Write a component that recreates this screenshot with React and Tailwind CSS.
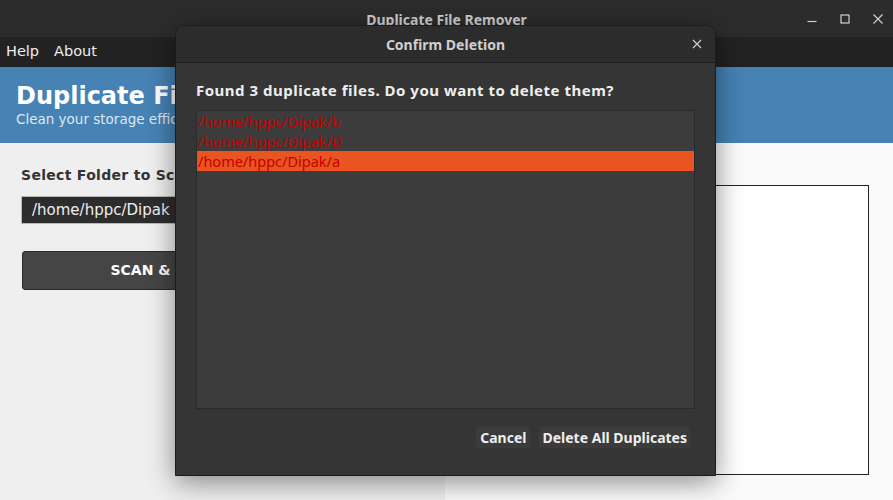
import React from 'react';

const gtk = { fontFamily: '"Noto Sans", "DejaVu Sans", sans-serif' };
const tk = { fontFamily: '"DejaVu Sans", "Noto Sans", sans-serif' };

const files = ['/home/hppc/Dipak/b', '/home/hppc/Dipak/D', '/home/hppc/Dipak/a'];

function WindowControls() {
  return (
    <div className="absolute right-0 top-0 h-[37px] flex items-center gap-[19px] pr-[8px] text-[#d0d0d0]">
      <svg width="14" height="14" viewBox="0 0 14 14">
        <path d="M2.5 9.5h9" stroke="currentColor" strokeWidth="1.2" />
      </svg>
      <svg width="14" height="14" viewBox="0 0 14 14">
        <rect x="3" y="3" width="8" height="8" fill="none" stroke="currentColor" strokeWidth="1.2" />
      </svg>
      <svg width="14" height="14" viewBox="0 0 14 14">
        <path d="M2.5 2.5l9 9M11.5 2.5l-9 9" stroke="currentColor" strokeWidth="1.2" />
      </svg>
    </div>
  );
}

function ConfirmDialog() {
  return (
    <div
      className="absolute left-[175px] top-[25px] w-[541px] h-[451px] bg-[#353535] rounded-t-[10px] border border-[#1c1c1c] shadow-[0_6px_28px_rgba(0,0,0,0.45)] flex flex-col"
      style={gtk}
    >
      <div className="relative h-[37px] shrink-0 bg-[#2c2c2c] rounded-t-[10px] border-b border-[#1e1e1e] flex items-center justify-center">
        <span className="text-[14px] font-bold text-[#cfcfcf]">Confirm Deletion</span>
        <svg className="absolute right-[12px] top-[12px] text-[#cfcfcf]" width="12" height="12" viewBox="0 0 12 12">
          <path d="M2 2l8 8M10 2l-8 8" stroke="currentColor" strokeWidth="1.2" />
        </svg>
      </div>
      <div className="flex flex-col px-[20px] pt-[17px] flex-1">
        <p className="text-[15px] font-bold text-[#eeeeee] leading-[20px] tracking-[0.5px]">
          Found 3 duplicate files. Do you want to delete them?
        </p>
        <div className="mt-[10px] h-[299px] bg-[#3c3c3c] border border-[#2a2a2a] flex flex-col">
          {files.map((f, i) => (
            <div
              key={f}
              className={
                'h-[20px] leading-[20px] text-[14.5px] pl-[1px] text-[#c40000] ' +
                (i === 2 ? 'bg-[#e95420]' : '')
              }
            >
              {f}
            </div>
          ))}
        </div>
        <div className="flex justify-end gap-[9px] mt-[17px] pr-[5px]">
          <button className="h-[22px] px-[4px] rounded-[3px] bg-[#3b3b3b] text-[14px] font-bold text-[#eeeeee]">
            Cancel
          </button>
          <button className="h-[22px] px-[3px] rounded-[3px] bg-[#3b3b3b] text-[14px] font-bold text-[#eeeeee]">
            Delete All Duplicates
          </button>
        </div>
      </div>
    </div>
  );
}

export default function App() {
  return (
    <div className="relative w-[893px] h-[500px] overflow-hidden bg-[#2c2c2c]">
      <div className="flex flex-col h-full">
        <div className="relative h-[37px] shrink-0 bg-[#2c2c2c] rounded-t-[10px] flex items-center justify-center" style={gtk}>
          <span className="text-[14px] font-bold text-[#cfcfcf] mt-[2px]">Duplicate File Remover</span>
          <WindowControls />
        </div>
        <div className="h-[30px] shrink-0 bg-[#222222] flex items-center gap-[15px] px-[6px] text-[14.5px] text-[#eeeeee]" style={tk}>
          <span>Help</span>
          <span>About</span>
        </div>
        <div className="h-[76px] shrink-0 bg-[#4682b4] px-[16px] pt-[14px]" style={tk}>
          <h1 className="text-[24px] font-bold text-white leading-[30px]">Duplicate File Remover</h1>
          <p className="text-[13.5px] text-[#dfe8f0] leading-[16px]">Clean your storage efficiently</p>
        </div>
        <div className="flex flex-1" style={tk}>
          <div className="w-[445px] bg-[#efefef] px-[21px] pt-[22px]">
            <div className="text-[14px] font-bold text-[#333333] tracking-[0.3px]">Select Folder to Scan</div>
            <div className="mt-[10px] h-[28px] bg-[#2d2d2d] border border-[#b8b8b8] pl-[10px] flex items-center text-[15px] text-[#eeeeee]">
              /home/hppc/Dipak
            </div>
            <button className="mt-[27px] ml-[1px] w-[402px] h-[39px] rounded-[3px] bg-[#454545] border border-[#2a2a2a] text-[14px] font-bold text-white">
              SCAN &amp; DELETE DUPLICATES
            </button>
          </div>
          <div className="flex-1 bg-[#fafafa] pt-[42px] pr-[24px] pb-[25px] pl-[24px] flex">
            <div className="flex-1 bg-white border border-[#222222]" />
          </div>
        </div>
      </div>
      <ConfirmDialog />
    </div>
  );
}
